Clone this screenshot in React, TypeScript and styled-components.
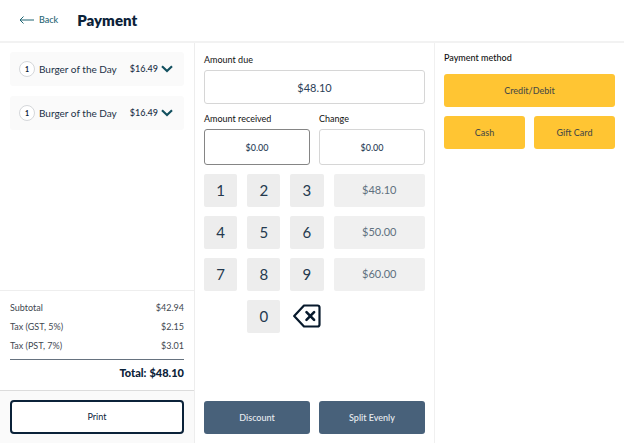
import React, { useState } from "react";
import styled, { createGlobalStyle } from "styled-components";

const navy = "#0b2239";

const GlobalStyle = createGlobalStyle`
  *, *::before, *::after { box-sizing: border-box; }
  body { margin: 0; background: #fff; color: ${navy}; font-family: Lato, "Open Sans", sans-serif; font-size: 10px; line-height: 12px; }
  button, input { font: inherit; color: inherit; margin: 0; }
  button { cursor: pointer; }
`;

const Page = styled.div`
  min-height: 100vh;
  display: flex;
  flex-direction: column;
`;

const Header = styled.header`
  display: flex;
  align-items: center;
  gap: 19px;
  height: 43px;
  padding: 0 19px 1px;
  border-bottom: 2px solid #f2f2f2;
`;

const BackLink = styled.a`
  display: flex;
  align-items: center;
  gap: 5px;
  color: #1f6573;
  font-size: 9px;
  font-weight: 500;
  text-decoration: none;
`;

const Title = styled.h1`
  margin: 0;
  font-size: 15px;
  line-height: 20px;
  font-weight: 800;
`;

const Columns = styled.main`
  flex: 1;
  display: grid;
  grid-template-columns: 195fr 240fr 189fr;
`;

const OrderPanel = styled.section`
  display: flex;
  flex-direction: column;
  border-right: 1px solid #ededed;
`;

const Items = styled.ul`
  flex: 1;
  margin: 0;
  padding: 9px 10px;
  list-style: none;
  display: flex;
  flex-direction: column;
  gap: 10px;
`;

const Item = styled.li`
  display: flex;
  align-items: center;
  height: 34px;
  padding: 0 11px 0 9px;
  border-radius: 3px;
  background: #fafafa;
`;

const Quantity = styled.span`
  display: grid;
  place-items: center;
  width: 16px;
  height: 16px;
  margin-right: 4px;
  border: 1px solid #d5d7da;
  border-radius: 50%;
  background: #fff;
  font-size: 7px;
  line-height: 14px;
  font-weight: 700;
`;

const ItemName = styled.span`
  flex: 1;
  color: #1c3147;
  white-space: nowrap;
`;

const ItemPrice = styled.span`
  color: #1c3147;
  font-size: 9px;
  font-weight: 500;
`;

const Expand = styled.button`
  display: grid;
  place-items: center;
  margin-left: 3px;
  padding: 0;
  border: 0;
  background: none;
`;

const Summary = styled.dl`
  margin: 0;
  padding: 8px 10px 9px;
  border-top: 1px solid #eee;
`;

const SummaryRow = styled.div`
  display: flex;
  justify-content: space-between;
  padding-bottom: 1px;
  color: #414850;
  font-size: 9px;
  line-height: 18px;
  dt, dd { margin: 0; }
`;

const TotalRow = styled.div`
  display: flex;
  justify-content: flex-end;
  gap: 3px;
  margin-top: 3px;
  padding-top: 5px;
  border-top: 1px solid #66727f;
  font-size: 11px;
  line-height: 16px;
  font-weight: 900;
  dt, dd { margin: 0; }
`;

const PrintBar = styled.div`
  padding: 9px 10px;
  border-top: 1px solid #dcdcdc;
  background: #fafafa;
`;

const PrintButton = styled.button`
  width: 100%;
  height: 34px;
  border: 2px solid ${navy};
  border-radius: 4px;
  background: #fff;
  font-size: 9px;
`;

const AmountPanel = styled.section`
  display: flex;
  flex-direction: column;
  padding: 11px 9px 9px;
  border-right: 1px solid #f0f0f0;
`;

const Field = styled.label`
  display: flex;
  flex-direction: column;
  gap: 4px;
  min-width: 0;
  color: #111;
  font-size: 9px;
`;

const AmountInput = styled.input<{ $large?: boolean; $active?: boolean }>`
  width: 100%;
  height: ${({ $large }) => ($large ? "34px" : "36px")};
  border: 1px solid ${({ $active }) => ($active ? "#858585" : "#d6d6d6")};
  border-radius: 3px;
  outline: none;
  background: #fff;
  color: #2b4058;
  font-size: ${({ $large }) => ($large ? "11px" : "9px")};
  font-weight: ${({ $large }) => ($large ? 400 : 500)};
  text-align: center;
`;

const Pair = styled.div`
  display: grid;
  grid-template-columns: 1fr 1fr;
  gap: 9px;
  margin-top: 9px;
`;

const Keypad = styled.div`
  display: grid;
  grid-template-columns: 33fr 33fr 33fr 91fr;
  gap: 9px 10px;
  margin: 9px 0;
`;

const Key = styled.button<{ $preset?: boolean }>`
  height: 33px;
  padding: 0 0 1px;
  border: 0;
  border-radius: 2px;
  background: ${({ $preset }) => ($preset ? "#f0f0f0" : "#ededed")};
  color: ${({ $preset }) => ($preset ? "#60707f" : "#24394e")};
  font-size: ${({ $preset }) => ($preset ? "11px" : "15px")};
`;

const ZeroKey = styled(Key)`
  grid-column: 2;
`;

const DeleteKey = styled.button`
  display: grid;
  place-items: center;
  height: 33px;
  padding: 0 0 1px;
  border: 0;
  background: none;
`;

const Actions = styled(Pair)`
  margin-top: auto;
`;

const SolidButton = styled.button<{ $tone: "slate" | "amber"; $wide?: boolean }>`
  height: 33px;
  padding: 0;
  border: 0;
  border-radius: 3px;
  background: ${({ $tone }) => ($tone === "slate" ? "#48617a" : "#ffc533")};
  color: ${({ $tone }) => ($tone === "slate" ? "#e9edf1" : "#4b4c45")};
  font-size: 9px;
  font-weight: 500;
  grid-column: ${({ $wide }) => ($wide ? "1 / -1" : "auto")};
`;

const MethodPanel = styled.section`
  padding: 9px;
`;

const MethodTitle = styled.h2`
  margin: 0 0 10px;
  color: #111;
  font-size: 9px;
  line-height: 12px;
  font-weight: 500;
`;

const Methods = styled.div`
  display: grid;
  grid-template-columns: 1fr 1fr;
  gap: 9px;
`;

const items = [
  { id: 1, name: "Burger of the Day", price: "$16.49" },
  { id: 2, name: "Burger of the Day", price: "$16.49" },
];

const charges = [
  ["Subtotal", "$42.94"],
  ["Tax (GST, 5%)", "$2.15"],
  ["Tax (PST, 7%)", "$3.01"],
];

const keyRows = [
  { digits: [1, 2, 3], preset: 4810 },
  { digits: [4, 5, 6], preset: 5000 },
  { digits: [7, 8, 9], preset: 6000 },
];

const due = 4810;
const money = (cents: number) => `$${(cents / 100).toFixed(2)}`;

const BackArrow = () => (
  <svg width="15" height="8" viewBox="0 0 15 8" fill="none" stroke="#1f6573" aria-hidden="true">
    <path d="M15 4H1M4.5.5L1 4l3.5 3.5" />
  </svg>
);

const Chevron = () => (
  <svg width="12" height="8" viewBox="0 0 12 8" fill="none" stroke="#12505f" strokeWidth="2.2" aria-hidden="true">
    <path d="M1 1.3l5 4.7 5-4.7" />
  </svg>
);

const DeleteIcon = () => (
  <svg width="28" height="24" viewBox="0 0 28 24" fill="none" stroke="#07192c" strokeWidth="2.2" strokeLinejoin="round" strokeLinecap="round" aria-hidden="true">
    <path d="M11 1.5h13.5q2 0 2 2v17q0 2-2 2H11L1.2 12z" />
    <path d="M13.5 8.2l7.6 7.6M21.1 8.2l-7.6 7.6" strokeWidth="2.6" />
  </svg>
);

export default function App() {
  const [received, setReceived] = useState(0);
  const press = (digit: number) => setReceived((v) => Math.min(v * 10 + digit, 999999));

  return (
    <>
      <GlobalStyle />
      <Page>
        <Header>
          <BackLink href="#"><BackArrow />Back</BackLink>
          <Title>Payment</Title>
        </Header>
        <Columns>
          <OrderPanel>
            <Items>
              {items.map((item) => (
                <Item key={item.id}>
                  <Quantity>1</Quantity>
                  <ItemName>{item.name}</ItemName>
                  <ItemPrice>{item.price}</ItemPrice>
                  <Expand aria-label="Show item details"><Chevron /></Expand>
                </Item>
              ))}
            </Items>
            <Summary>
              {charges.map(([label, value]) => (
                <SummaryRow key={label}><dt>{label}</dt><dd>{value}</dd></SummaryRow>
              ))}
              <TotalRow><dt>Total:</dt><dd>{money(due)}</dd></TotalRow>
            </Summary>
            <PrintBar><PrintButton>Print</PrintButton></PrintBar>
          </OrderPanel>

          <AmountPanel>
            <Field>Amount due<AmountInput $large readOnly value={money(due)} /></Field>
            <Pair>
              <Field>Amount received<AmountInput $active readOnly value={money(received)} /></Field>
              <Field>Change<AmountInput readOnly value={money(Math.max(received - due, 0))} /></Field>
            </Pair>
            <Keypad>
              {keyRows.map(({ digits, preset }) => (
                <React.Fragment key={preset}>
                  {digits.map((d) => <Key key={d} onClick={() => press(d)}>{d}</Key>)}
                  <Key $preset onClick={() => setReceived(preset)}>{money(preset)}</Key>
                </React.Fragment>
              ))}
              <ZeroKey onClick={() => press(0)}>0</ZeroKey>
              <DeleteKey aria-label="Delete digit" onClick={() => setReceived((v) => Math.floor(v / 10))}>
                <DeleteIcon />
              </DeleteKey>
            </Keypad>
            <Actions>
              <SolidButton $tone="slate">Discount</SolidButton>
              <SolidButton $tone="slate">Split Evenly</SolidButton>
            </Actions>
          </AmountPanel>

          <MethodPanel>
            <MethodTitle>Payment method</MethodTitle>
            <Methods>
              <SolidButton $tone="amber" $wide>Credit/Debit</SolidButton>
              <SolidButton $tone="amber">Cash</SolidButton>
              <SolidButton $tone="amber">Gift Card</SolidButton>
            </Methods>
          </MethodPanel>
        </Columns>
      </Page>
    </>
  );
}
